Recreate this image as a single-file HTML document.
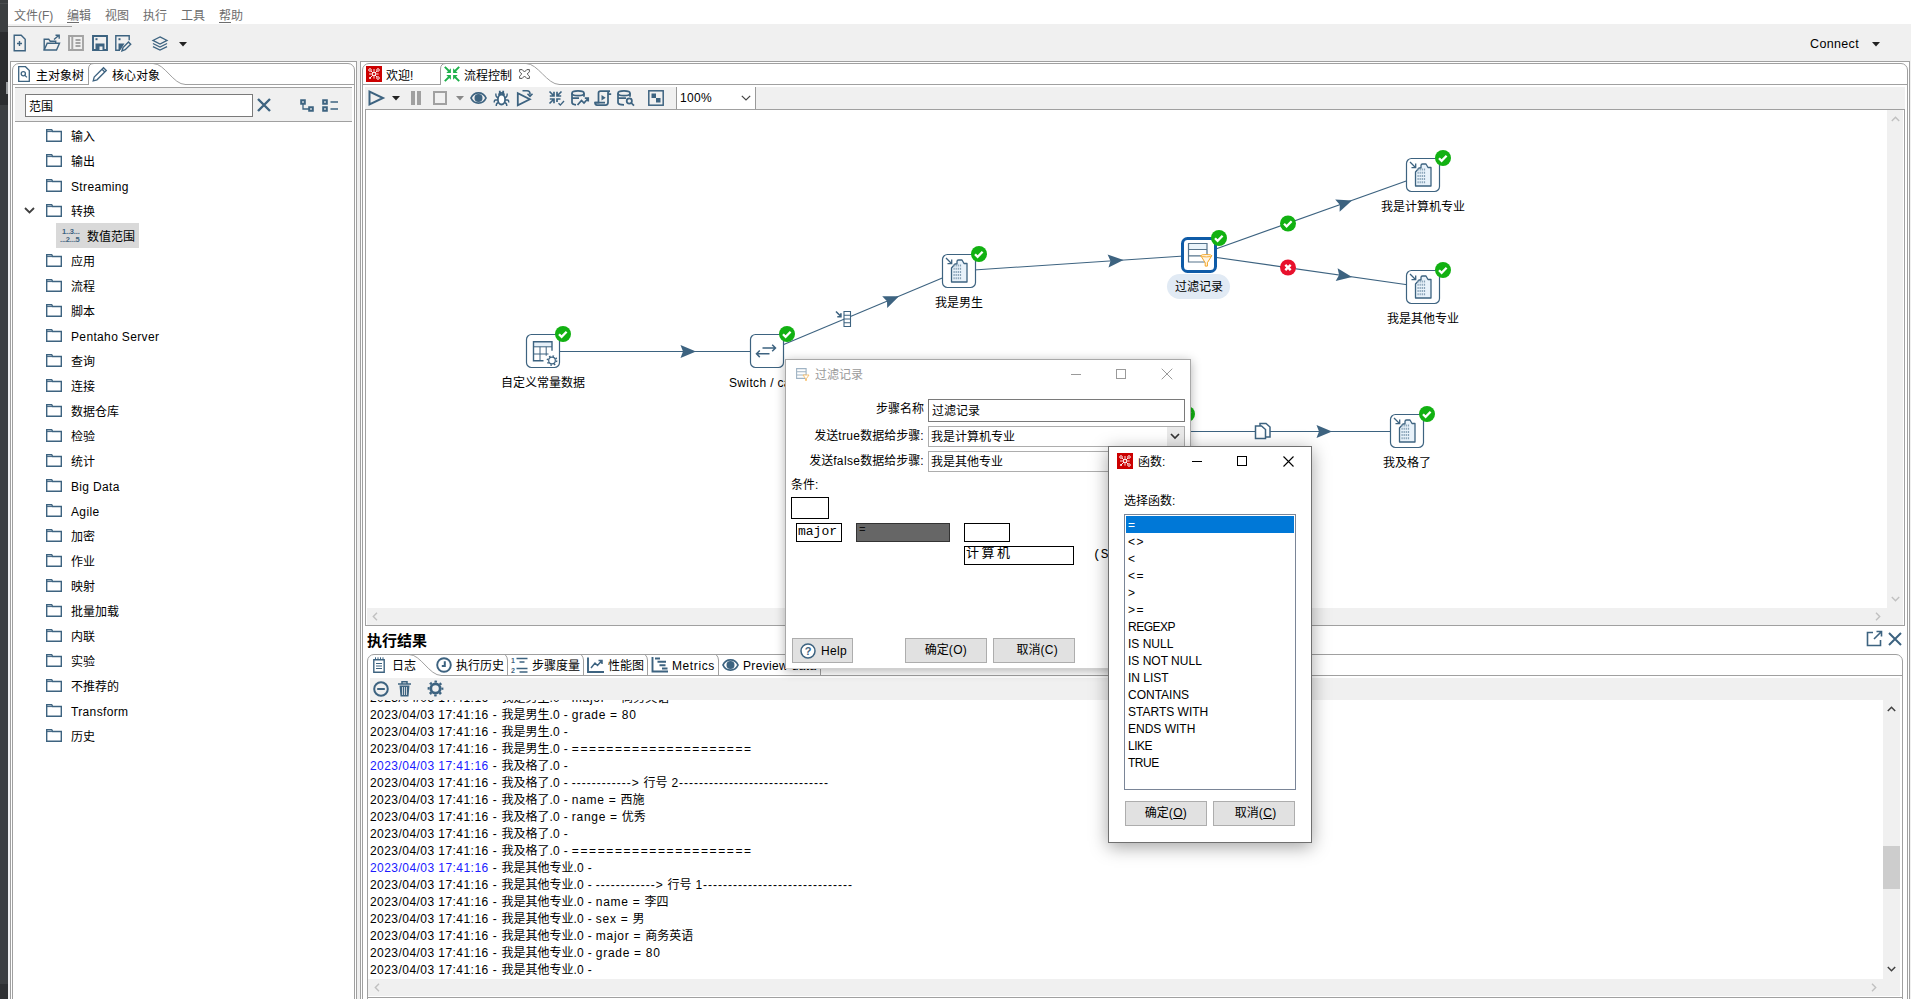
<!DOCTYPE html>
<html lang="zh-CN"><head><meta charset="utf-8"><title>Spoon - 流程控制</title>
<style>
*{box-sizing:border-box;margin:0;padding:0}
html,body{width:1911px;height:999px;overflow:hidden}
body{position:relative;background:#f0f0f0;font-family:"Liberation Sans","Noto Sans CJK SC",sans-serif;font-size:12px;color:#000;line-height:16px}
.a{position:absolute}
.t{position:absolute;white-space:nowrap;line-height:16px;height:16px}
.l{letter-spacing:.35px}
.u{letter-spacing:0}
.ts{letter-spacing:.45px}
.sp{letter-spacing:.7px}
.m{letter-spacing:.7px}
.e{letter-spacing:1.6px}
.d{letter-spacing:1px}
svg{position:absolute;overflow:visible}
.ln{position:absolute;background:#a0a0a0}

</style></head>
<body>
<div class="a" style="left:0;top:0;width:8px;height:999px;background:#3c3f41"></div><div class="a" style="left:0;top:3px;width:8px;height:1px;background:#4a4d4f"></div><div class="a" style="left:0;top:32px;width:8px;height:73px;background:#2b2d2f"></div><div class="a" style="left:6px;top:82px;width:2px;height:12px;background:#9a9d9f"></div><div class="a" style="left:0;top:984px;width:8px;height:15px;background:#2f3133"></div><div class="a" style="left:8px;top:0;width:1903px;height:24px;background:#fff"></div><div class="t" style="left:14px;top:8px;color:#6d6d6d">文件(F)</div><div class="t" style="left:67px;top:8px;color:#6d6d6d">编辑</div><div class="t" style="left:105px;top:8px;color:#6d6d6d">视图</div><div class="t" style="left:143px;top:8px;color:#6d6d6d">执行</div><div class="t" style="left:181px;top:8px;color:#6d6d6d">工具</div><div class="t" style="left:219px;top:8px;color:#6d6d6d">帮助</div><div class="a" style="left:67px;top:22px;width:12px;height:1px;background:#6d6d6d"></div><div class="a" style="left:219px;top:22px;width:12px;height:1px;background:#6d6d6d"></div><div class="a" style="left:8px;top:26px;width:64px;height:1px;background:#a0a0a0"></div><div class="t" style="left:1810px;top:36px;font-size:12.5px"><span class="l">Connect</span></div><svg style="left:1872px;top:42px" width="9" height="5"><path d="M0 0h8l-4 4.5z" fill="#222"/></svg><svg style="left:13px;top:34px" width="14" height="18" viewBox="0 0 14 18"><path d="M1.2 1.2h7l4 4v11.6h-11z" fill="none" stroke="#3d6380" stroke-width="1.4"/><path d="M4 9.5h5M6.5 7v5" fill="none" stroke="#3d6380" stroke-width="1.4"/></svg><svg style="left:43px;top:34px" width="18" height="18" viewBox="0 0 18 18"><path d="M1.2 16V5.2h4.5l1.5 2h5.5v2" fill="none" stroke="#3d6380" stroke-width="1.4"/><path d="M1.2 16l3-6.8h12.3l-3 6.8z" fill="none" stroke="#3d6380" stroke-width="1.4"/><path d="M11 5.5l5-4.3M12.5 1.2h3.7v3.6" fill="none" stroke="#3d6380" stroke-width="1.4"/></svg><svg style="left:68px;top:35px" width="16" height="16" viewBox="0 0 16 16"><path d="M1 1h14v14H1z" fill="none" stroke="#a3a3a3" stroke-width="1.900"/><path d="M4.300 1v14M7.500 5h5M7.500 8h5M7.500 11h5" fill="none" stroke="#a3a3a3" stroke-width="1.900"/></svg><svg style="left:92px;top:35px" width="16" height="16" viewBox="0 0 16 16"><path d="M1 1h14v14H1z" fill="none" stroke="#3d6380" stroke-width="1.900"/><path d="M3.5 8.5h9v6.5h-9z" fill="#3d6380"/><path d="M7.5 11.5h3v3.5h-3z" fill="#f0f0f0"/><path d="M3.5 3.2h2v2h-2z" fill="#3d6380"/></svg><svg style="left:115px;top:35px" width="17" height="17" viewBox="0 0 17 17"><path d="M5 15.2H.8V.8h13.4v4.5" fill="none" stroke="#3d6380" stroke-width="1.4"/><path d="M3.5 8.5h6l-4 6.5h-2z" fill="#3d6380"/><path d="M3.5 3.2h2v2h-2z" fill="#3d6380"/><path d="M7 15.8l1-3.3 5.5-5.5 2.2 2.2-5.5 5.5z" fill="none" stroke="#3d6380" stroke-width="1.4"/></svg><svg style="left:152px;top:36px" width="16" height="15" viewBox="0 0 18 17"><path d="M9 1l8 4-8 4-8-4z" fill="none" stroke="#3d6380" stroke-width="1.4"/><path d="M1 8.5l8 4 8-4M1 12l8 4 8-4" fill="none" stroke="#3d6380" stroke-width="1.4"/></svg><svg style="left:179px;top:42px" width="9" height="5"><path d="M0 0h8l-4 4.5z" fill="#222"/></svg><div class="a" style="left:10px;top:61px;width:347px;height:950px;border:1px solid #a0a0a0;background:#fff"></div><div class="a" style="left:12px;top:63px;width:343px;height:950px;border:1px solid #a0a0a0;border-radius:7px 7px 0 0;background:#fff"></div><div class="ln" style="left:13px;top:84px;width:341px;height:1px"></div><div class="a" style="left:89px;top:84px;width:96px;height:1px;background:#fff"></div><svg style="left:12px;top:63px" width="343" height="23" viewBox="0 0 343 23"><path d="M76.5 21.5 V6 Q76.5 .5 82 .5 M141 .5 C153 .5 161 21.5 173.5 21.5" fill="none" stroke="#a0a0a0" stroke-width="1"/></svg><svg style="left:18px;top:66px" width="12" height="16" viewBox="0 0 12 16"><path d="M.7.7h6.8l3.8 3.8v10.8H.7z" fill="none" stroke="#3d6380" stroke-width="1.3"/><circle cx="5.3" cy="7.8" r="2.1" fill="none" stroke="#3d6380" stroke-width="1.3"/><path d="M6.9 9.4l2 2" fill="none" stroke="#3d6380" stroke-width="1.3"/></svg><div class="t" style="left:36px;top:68px">主对象树</div><svg style="left:92px;top:66px" width="16" height="16" viewBox="0 0 16 16"><path d="M1.2 14.8l1-3.8L11.5 1.7l2.8 2.8L5 13.8z" fill="none" stroke="#3d6380" stroke-width="1.3"/><path d="M10 3.2l2.8 2.8" fill="none" stroke="#3d6380" stroke-width="1.3"/></svg><div class="t" style="left:112px;top:68px">核心对象</div><div class="a" style="left:15px;top:87px;width:337px;height:35px;background:#f0f0f0;border-top:1px solid #a0a0a0;border-bottom:1px solid #a0a0a0"></div><div class="a" style="left:25px;top:94px;width:228px;height:23px;background:#fff;border:1px solid #7a7a7a"></div><div class="t" style="left:29px;top:99px">范围</div><svg style="left:257px;top:98px" width="14" height="14" viewBox="0 0 14 14"><path d="M1 1l12 12M13 1L1 13" stroke="#3d6380" stroke-width="2.400" fill="none"/></svg><svg style="left:300px;top:99px" width="14" height="13" viewBox="0 0 14 13"><path d="M1.200 1.200h3.600v3.600H1.200zM9.200 8.200h3.600v3.600H9.200z" fill="none" stroke="#3d6380" stroke-width="2"/><path d="M3 5v5h6" fill="none" stroke="#3d6380" stroke-width="1.300"/></svg><svg style="left:322px;top:99px" width="16" height="13" viewBox="0 0 16 13"><path d="M1.200 1.200h3.600v3.600H1.200zM1.200 8.200h3.600v3.600H1.200z" fill="none" stroke="#3d6380" stroke-width="2"/><path d="M8.500 3h7.500M8.500 10h7.500" fill="none" stroke="#3d6380" stroke-width="1.400"/></svg><svg style="left:46px;top:129px" width="16" height="13" viewBox="0 0 16 13"><path d="M.7 12.3V.7h5l1 1.8h8.6v9.8z" fill="none" stroke="#3d6380" stroke-width="1.4"/><path d="M.7 2.6h6" stroke="#3d6380" stroke-width="1"/></svg><div class="t" style="left:71px;top:129px">输入</div><svg style="left:46px;top:154px" width="16" height="13" viewBox="0 0 16 13"><path d="M.7 12.3V.7h5l1 1.8h8.6v9.8z" fill="none" stroke="#3d6380" stroke-width="1.4"/><path d="M.7 2.6h6" stroke="#3d6380" stroke-width="1"/></svg><div class="t" style="left:71px;top:154px">输出</div><svg style="left:46px;top:179px" width="16" height="13" viewBox="0 0 16 13"><path d="M.7 12.3V.7h5l1 1.8h8.6v9.8z" fill="none" stroke="#3d6380" stroke-width="1.4"/><path d="M.7 2.6h6" stroke="#3d6380" stroke-width="1"/></svg><div class="t" style="left:71px;top:179px"><span class="l">Streaming</span></div><svg style="left:46px;top:204px" width="16" height="13" viewBox="0 0 16 13"><path d="M.7 12.3V.7h5l1 1.8h8.6v9.8z" fill="none" stroke="#3d6380" stroke-width="1.4"/><path d="M.7 2.6h6" stroke="#3d6380" stroke-width="1"/></svg><div class="t" style="left:71px;top:204px">转换</div><div class="a" style="left:56px;top:223px;width:83px;height:25px;background:#d9d9d9"></div><div class="t" style="left:60px;top:228px;font-size:7.500px;font-weight:bold;line-height:7.500px;height:16px;color:#3d6380;letter-spacing:-.15px">&nbsp;1..3...<br>...2...5</div><div class="t" style="left:87px;top:229px">数值范围</div><svg style="left:46px;top:254px" width="16" height="13" viewBox="0 0 16 13"><path d="M.7 12.3V.7h5l1 1.8h8.6v9.8z" fill="none" stroke="#3d6380" stroke-width="1.4"/><path d="M.7 2.6h6" stroke="#3d6380" stroke-width="1"/></svg><div class="t" style="left:71px;top:254px">应用</div><svg style="left:46px;top:279px" width="16" height="13" viewBox="0 0 16 13"><path d="M.7 12.3V.7h5l1 1.8h8.6v9.8z" fill="none" stroke="#3d6380" stroke-width="1.4"/><path d="M.7 2.6h6" stroke="#3d6380" stroke-width="1"/></svg><div class="t" style="left:71px;top:279px">流程</div><svg style="left:46px;top:304px" width="16" height="13" viewBox="0 0 16 13"><path d="M.7 12.3V.7h5l1 1.8h8.6v9.8z" fill="none" stroke="#3d6380" stroke-width="1.4"/><path d="M.7 2.6h6" stroke="#3d6380" stroke-width="1"/></svg><div class="t" style="left:71px;top:304px">脚本</div><svg style="left:46px;top:329px" width="16" height="13" viewBox="0 0 16 13"><path d="M.7 12.3V.7h5l1 1.8h8.6v9.8z" fill="none" stroke="#3d6380" stroke-width="1.4"/><path d="M.7 2.6h6" stroke="#3d6380" stroke-width="1"/></svg><div class="t" style="left:71px;top:329px"><span class="l">Pentaho Server</span></div><svg style="left:46px;top:354px" width="16" height="13" viewBox="0 0 16 13"><path d="M.7 12.3V.7h5l1 1.8h8.6v9.8z" fill="none" stroke="#3d6380" stroke-width="1.4"/><path d="M.7 2.6h6" stroke="#3d6380" stroke-width="1"/></svg><div class="t" style="left:71px;top:354px">查询</div><svg style="left:46px;top:379px" width="16" height="13" viewBox="0 0 16 13"><path d="M.7 12.3V.7h5l1 1.8h8.6v9.8z" fill="none" stroke="#3d6380" stroke-width="1.4"/><path d="M.7 2.6h6" stroke="#3d6380" stroke-width="1"/></svg><div class="t" style="left:71px;top:379px">连接</div><svg style="left:46px;top:404px" width="16" height="13" viewBox="0 0 16 13"><path d="M.7 12.3V.7h5l1 1.8h8.6v9.8z" fill="none" stroke="#3d6380" stroke-width="1.4"/><path d="M.7 2.6h6" stroke="#3d6380" stroke-width="1"/></svg><div class="t" style="left:71px;top:404px">数据仓库</div><svg style="left:46px;top:429px" width="16" height="13" viewBox="0 0 16 13"><path d="M.7 12.3V.7h5l1 1.8h8.6v9.8z" fill="none" stroke="#3d6380" stroke-width="1.4"/><path d="M.7 2.6h6" stroke="#3d6380" stroke-width="1"/></svg><div class="t" style="left:71px;top:429px">检验</div><svg style="left:46px;top:454px" width="16" height="13" viewBox="0 0 16 13"><path d="M.7 12.3V.7h5l1 1.8h8.6v9.8z" fill="none" stroke="#3d6380" stroke-width="1.4"/><path d="M.7 2.6h6" stroke="#3d6380" stroke-width="1"/></svg><div class="t" style="left:71px;top:454px">统计</div><svg style="left:46px;top:479px" width="16" height="13" viewBox="0 0 16 13"><path d="M.7 12.3V.7h5l1 1.8h8.6v9.8z" fill="none" stroke="#3d6380" stroke-width="1.4"/><path d="M.7 2.6h6" stroke="#3d6380" stroke-width="1"/></svg><div class="t" style="left:71px;top:479px"><span class="l">Big Data</span></div><svg style="left:46px;top:504px" width="16" height="13" viewBox="0 0 16 13"><path d="M.7 12.3V.7h5l1 1.8h8.6v9.8z" fill="none" stroke="#3d6380" stroke-width="1.4"/><path d="M.7 2.6h6" stroke="#3d6380" stroke-width="1"/></svg><div class="t" style="left:71px;top:504px"><span class="l">Agile</span></div><svg style="left:46px;top:529px" width="16" height="13" viewBox="0 0 16 13"><path d="M.7 12.3V.7h5l1 1.8h8.6v9.8z" fill="none" stroke="#3d6380" stroke-width="1.4"/><path d="M.7 2.6h6" stroke="#3d6380" stroke-width="1"/></svg><div class="t" style="left:71px;top:529px">加密</div><svg style="left:46px;top:554px" width="16" height="13" viewBox="0 0 16 13"><path d="M.7 12.3V.7h5l1 1.8h8.6v9.8z" fill="none" stroke="#3d6380" stroke-width="1.4"/><path d="M.7 2.6h6" stroke="#3d6380" stroke-width="1"/></svg><div class="t" style="left:71px;top:554px">作业</div><svg style="left:46px;top:579px" width="16" height="13" viewBox="0 0 16 13"><path d="M.7 12.3V.7h5l1 1.8h8.6v9.8z" fill="none" stroke="#3d6380" stroke-width="1.4"/><path d="M.7 2.6h6" stroke="#3d6380" stroke-width="1"/></svg><div class="t" style="left:71px;top:579px">映射</div><svg style="left:46px;top:604px" width="16" height="13" viewBox="0 0 16 13"><path d="M.7 12.3V.7h5l1 1.8h8.6v9.8z" fill="none" stroke="#3d6380" stroke-width="1.4"/><path d="M.7 2.6h6" stroke="#3d6380" stroke-width="1"/></svg><div class="t" style="left:71px;top:604px">批量加载</div><svg style="left:46px;top:629px" width="16" height="13" viewBox="0 0 16 13"><path d="M.7 12.3V.7h5l1 1.8h8.6v9.8z" fill="none" stroke="#3d6380" stroke-width="1.4"/><path d="M.7 2.6h6" stroke="#3d6380" stroke-width="1"/></svg><div class="t" style="left:71px;top:629px">内联</div><svg style="left:46px;top:654px" width="16" height="13" viewBox="0 0 16 13"><path d="M.7 12.3V.7h5l1 1.8h8.6v9.8z" fill="none" stroke="#3d6380" stroke-width="1.4"/><path d="M.7 2.6h6" stroke="#3d6380" stroke-width="1"/></svg><div class="t" style="left:71px;top:654px">实验</div><svg style="left:46px;top:679px" width="16" height="13" viewBox="0 0 16 13"><path d="M.7 12.3V.7h5l1 1.8h8.6v9.8z" fill="none" stroke="#3d6380" stroke-width="1.4"/><path d="M.7 2.6h6" stroke="#3d6380" stroke-width="1"/></svg><div class="t" style="left:71px;top:679px">不推荐的</div><svg style="left:46px;top:704px" width="16" height="13" viewBox="0 0 16 13"><path d="M.7 12.3V.7h5l1 1.8h8.6v9.8z" fill="none" stroke="#3d6380" stroke-width="1.4"/><path d="M.7 2.6h6" stroke="#3d6380" stroke-width="1"/></svg><div class="t" style="left:71px;top:704px"><span class="l">Transform</span></div><svg style="left:46px;top:729px" width="16" height="13" viewBox="0 0 16 13"><path d="M.7 12.3V.7h5l1 1.8h8.6v9.8z" fill="none" stroke="#3d6380" stroke-width="1.4"/><path d="M.7 2.6h6" stroke="#3d6380" stroke-width="1"/></svg><div class="t" style="left:71px;top:729px">历史</div><svg style="left:24px;top:207px" width="11" height="7" viewBox="0 0 11 7"><path d="M1 1l4.500 4.500L10 1" fill="none" stroke="#404040" stroke-width="1.800"/></svg><div class="a" style="left:360px;top:61px;width:1550px;height:950px;border:1px solid #a0a0a0;background:#fff"></div><div class="a" style="left:362px;top:63px;width:1546px;height:950px;border:1px solid #a0a0a0;border-radius:7px 7px 0 0;background:#fff"></div><div class="ln" style="left:363px;top:84px;width:1544px;height:1px"></div><div class="a" style="left:441px;top:84px;width:118px;height:1px;background:#fff"></div><svg style="left:362px;top:63px" width="300" height="23" viewBox="0 0 300 23"><path d="M78.5 21.5 V6 Q78.5 .5 84 .5 M164 .5 C176 .5 185 21.5 197.5 21.5" fill="none" stroke="#a0a0a0" stroke-width="1"/></svg><svg style="left:366px;top:66px" width="16" height="16" viewBox="0 0 16 16"><rect width="16" height="16" fill="#cc0000"/><g fill="none" stroke="#fff" stroke-width=".9"><circle cx="8" cy="8" r="1.6"/><circle cx="4" cy="4" r="1.3"/><circle cx="12" cy="4" r="1.3"/><circle cx="12" cy="12" r="1.3"/><path d="M5 5l2 2M11 5l-2 2M11 11l-2-2M7 9l-3 3M8 3v3.4M8 9.6v3M3 8h3.4M9.6 8h3"/></g><circle cx="4" cy="12" r="1" fill="#fff"/></svg><div class="t" style="left:386px;top:68px">欢迎<span class="l">!</span></div><svg style="left:444px;top:66px" width="16" height="16" viewBox="0 0 16 16"><g fill="#1eb04b" stroke="none"><path d="M6.900 6.900V2.300L2.300 6.900zM9.100 6.900V2.300L13.700 6.900zM6.900 9.100V13.700L2.300 9.100zM9.100 9.100V13.700L13.700 9.100z"/></g><g fill="none" stroke="#1eb04b" stroke-width="1.900"><path d="M.8.800L5 5M15.200.8L11 5M.8 15.200L5 11M15.200 15.200L11 11"/></g></svg><div class="t" style="left:464px;top:68px">流程控制</div><svg style="left:519px;top:69px" width="11" height="10" viewBox="0 0 11 10"><path d="M.6.6h2.6L5.5 3 7.8.6h2.6v2.2L8.2 5l2.2 2.2v2.2H7.8L5.5 7 3.2 9.4H.6V7.2L2.8 5 .6 2.8z" fill="#fff" stroke="#444" stroke-width=".9"/></svg><div class="a" style="left:365px;top:87px;width:1540px;height:22px;background:#f0f0f0"></div><svg style="left:368px;top:90px" width="17" height="16" viewBox="0 0 17 16"><path d="M1.5 1.5v13l13.5-6.5z" fill="none" stroke="#3d6380" stroke-width="2" stroke-linejoin="miter"/></svg><svg style="left:392px;top:96px" width="9" height="5"><path d="M0 0h8l-4 4.5z" fill="#222"/></svg><div class="a" style="left:411px;top:91px;width:4px;height:14px;background:#a0a0a0"></div><div class="a" style="left:417px;top:91px;width:4px;height:14px;background:#a0a0a0"></div><div class="a" style="left:433px;top:91px;width:14px;height:14px;border:2px solid #a0a0a0"></div><svg style="left:456px;top:96px" width="9" height="5"><path d="M0 0h8l-4 4.5z" fill="#888"/></svg><svg style="left:470px;top:92px" width="17" height="12" viewBox="0 0 17 12"><path d="M1 6C4 -.8 13 -.8 16 6C13 12.800 4 12.800 1 6z" fill="none" stroke="#3d6380" stroke-width="1.800"/><circle cx="8.500" cy="6" r="4" fill="#3d6380"/></svg><svg style="left:493px;top:90px" width="17" height="16" viewBox="0 0 17 16"><g fill="none" stroke="#3d6380" stroke-width="1.800"><ellipse cx="8.500" cy="9.500" rx="3.600" ry="5" fill="#fff"/><path d="M6 5.200Q6 2.800 8.500 2.800Q11 2.800 11 5.200M6.800 2.800V.8M10.200 2.800V.8"/><path stroke-width="1.400" d="M5 7.500Q2.800 7.500 2.800 3.500M12 7.500Q14.200 7.500 14.200 3.500M4.800 10H2.500Q1.200 10 1.200 12.500M12.200 10h2.300Q15.800 10 15.800 12.500M5.300 12.800Q3.200 13 3.200 16M11.700 12.800Q13.800 13 13.800 16"/></g></svg><svg style="left:516px;top:89px" width="18" height="17" viewBox="0 0 18 17"><path d="M1.800 4.200v12l12-6z" fill="none" stroke="#3d6380" stroke-width="1.800"/><path d="M6.500 1.800h4.500q3 0 3 3v1" fill="none" stroke="#3d6380" stroke-width="1.600"/><path d="M11.500 4.800l2.500 2.500 2.500-2.500" fill="none" stroke="#3d6380" stroke-width="1.600"/></svg><svg style="left:548px;top:90px" width="17" height="16" viewBox="0 0 17 16"><g fill="none" stroke="#3d6380" stroke-width="1.700"><path d="M1.500 1.500l4 4M1.800 6h4.200V1.800M13.500 1.500l-4 4M13.200 6H9V1.800M1.500 13.500l4-4M1.800 9h4.200v4.200M9 12V9h3.500"/><path d="M10.500 13.300l1.800 1.800L16 11" stroke-width="1.400"/></g></svg><svg style="left:571px;top:90px" width="18" height="16" viewBox="0 0 18 16"><g fill="none" stroke="#3d6380" stroke-width="1.750"><ellipse cx="7" cy="3.2" rx="6" ry="2.4"/><path d="M1 3.2v9.3Q1 14.5 5 14.8M13 3.2v3.5M1 8h7"/><path d="M6.5 15l4-4.5 2.5 2.5 4-4.5M13.8 8.2h3.4v3.4"/></g></svg><svg style="left:594px;top:90px" width="18" height="16" viewBox="0 0 18 16"><g fill="none" stroke="#3d6380" stroke-width="1.750"><path d="M4.5 12.5V3Q4.5 1 6.5 1h9.5Q14 1 14 3v9.5Q14 15 11.5 15H3Q1 15 1 12.5z"/><path d="M14 4h3.2M1 12.5h10"/></g><path d="M7.5 5v5.5l4.2-2.75z" fill="#3d6380"/></svg><svg style="left:617px;top:90px" width="18" height="16" viewBox="0 0 18 16"><g fill="none" stroke="#3d6380" stroke-width="1.750"><ellipse cx="7" cy="3.2" rx="6" ry="2.4"/><path d="M1 3.2v9.3Q1 14.8 7 14.8M13 3.2v3.5M1 8h8"/><circle cx="12.3" cy="11" r="2.6"/><path d="M14.3 13l2.7 2.7"/></g></svg><svg style="left:648px;top:90px" width="16" height="16" viewBox="0 0 16 16"><rect x=".8" y=".8" width="14.4" height="14.4" fill="none" stroke="#3d6380" stroke-width="1.5"/><rect x="3.5" y="3.5" width="4.5" height="4.5" fill="#3d6380"/><rect x="8" y="8" width="4.5" height="4.5" fill="#3d6380"/></svg><div class="a" style="left:677px;top:87px;width:78px;height:22px;background:#fff"></div><div class="ln" style="left:676px;top:87px;width:1px;height:22px;background:#9a9a9a"></div><div class="ln" style="left:755px;top:87px;width:1px;height:22px;background:#9a9a9a"></div><div class="t" style="left:680px;top:90px"><span class="l">100%</span></div><svg style="left:741px;top:95px" width="10" height="6" viewBox="0 0 10 6"><path d="M.8.8L5 5 9.2.8" fill="none" stroke="#444" stroke-width="1.2"/></svg><div class="a" style="left:365px;top:109px;width:1540px;height:517px;border:1px solid #a0a0a0;background:#fff"></div><div class="a" style="left:1887px;top:110px;width:16px;height:498px;background:#f0f0f0"></div><div class="a" style="left:367px;top:608px;width:1536px;height:17px;background:#f0f0f0"></div><svg style="left:1891px;top:116px" width="9" height="6" viewBox="0 0 9 6"><path d="M.8 5L4.5 1.3 8.2 5" fill="none" stroke="#c0c0c0" stroke-width="1.4"/></svg><svg style="left:1891px;top:596px" width="9" height="6" viewBox="0 0 9 6"><path d="M.8 1L4.5 4.7 8.2 1" fill="none" stroke="#c0c0c0" stroke-width="1.4"/></svg><svg style="left:372px;top:612px" width="6" height="9" viewBox="0 0 6 9"><path d="M5 .8L1.3 4.5 5 8.2" fill="none" stroke="#c0c0c0" stroke-width="1.4"/></svg><svg style="left:1875px;top:612px" width="6" height="9" viewBox="0 0 6 9"><path d="M1 .8L4.7 4.5 1 8.2" fill="none" stroke="#c0c0c0" stroke-width="1.4"/></svg><svg style="left:0;top:0" width="1911" height="999" viewBox="0 0 1911 999"><path d="M543.0 351.5L767.0 351.5" stroke="#3d6380" stroke-width="1.100" fill="none"/><polygon points="696.0,351.5 680.5,345.0 683.0,351.5 680.5,358.0" fill="#3d6380"/><path d="M767.0 351.5L959.0 271.0" stroke="#3d6380" stroke-width="1.100" fill="none"/><polygon points="899.0,296.2 882.2,296.2 887.0,301.2 887.2,308.1" fill="#3d6380"/><path d="M959.0 271.0L1199.0 255.0" stroke="#3d6380" stroke-width="1.100" fill="none"/><polygon points="1123.5,260.0 1107.6,254.6 1110.5,260.9 1108.5,267.5" fill="#3d6380"/><path d="M1199.0 255.0L1423.0 175.0" stroke="#3d6380" stroke-width="1.100" fill="none"/><polygon points="1352.0,200.4 1335.2,199.4 1339.8,204.7 1339.6,211.7" fill="#3d6380"/><path d="M1199.0 255.0L1423.0 287.0" stroke="#3d6380" stroke-width="1.100" fill="none"/><polygon points="1352.0,276.9 1337.6,268.2 1339.1,275.0 1335.7,281.1" fill="#3d6380"/><path d="M1167.0 431.5L1407.0 431.5" stroke="#3d6380" stroke-width="1.100" fill="none"/><polygon points="1332.0,431.5 1316.5,425.0 1319.0,431.5 1316.5,438.0" fill="#3d6380"/><rect x="526.5" y="334.5" width="33" height="33" rx="5" fill="#fff" stroke="#3d6380" stroke-width="1.2"/><rect x="750.5" y="334.5" width="33" height="33" rx="5" fill="#fff" stroke="#3d6380" stroke-width="1.2"/><rect x="942.5" y="254.5" width="33" height="33" rx="5" fill="#fff" stroke="#3d6380" stroke-width="1.2"/><rect x="1182.5" y="238.5" width="33" height="33" rx="5" fill="#fff" stroke="#0f5ba7" stroke-width="3"/><rect x="1406.5" y="158.5" width="33" height="33" rx="5" fill="#fff" stroke="#3d6380" stroke-width="1.2"/><rect x="1406.5" y="270.5" width="33" height="33" rx="5" fill="#fff" stroke="#3d6380" stroke-width="1.2"/><rect x="1390.5" y="414.5" width="33" height="33" rx="5" fill="#fff" stroke="#3d6380" stroke-width="1.2"/><rect x="1150.5" y="414.5" width="33" height="33" rx="5" fill="#fff" stroke="#3d6380" stroke-width="1.2"/><path d="M946.0 258.0l5.5 5.5M947.5 263.7h4.2v-4.2" fill="none" stroke="#3d6380" stroke-width="1.3"/><path d="M951.5 282.0V268.0L955.0 264.0H957.0V261.5Q957.0 260.0 958.5 260.0H962.0L964.0 263.5H967.0V282.0z" fill="#e8f2fa" stroke="#3d6380" stroke-width="1.3" stroke-linejoin="round"/><path d="M953.5 265.5h8.500" stroke="#86a1b6" stroke-width="2" stroke-dasharray="1.200 .9" fill="none"/><path d="M953.5 268.7h8.500" stroke="#86a1b6" stroke-width="2" stroke-dasharray="1.200 .9" fill="none"/><path d="M953.5 271.9h8.500" stroke="#86a1b6" stroke-width="2" stroke-dasharray="1.200 .9" fill="none"/><path d="M953.5 275.1h8.500" stroke="#86a1b6" stroke-width="2" stroke-dasharray="1.200 .9" fill="none"/><path d="M953.5 278.3h8.500" stroke="#86a1b6" stroke-width="2" stroke-dasharray="1.200 .9" fill="none"/><path d="M1410.0 162.0l5.5 5.5M1411.5 167.7h4.2v-4.2" fill="none" stroke="#3d6380" stroke-width="1.3"/><path d="M1415.5 186.0V172.0L1419.0 168.0H1421.0V165.5Q1421.0 164.0 1422.5 164.0H1426.0L1428.0 167.5H1431.0V186.0z" fill="#e8f2fa" stroke="#3d6380" stroke-width="1.3" stroke-linejoin="round"/><path d="M1417.5 169.5h8.500" stroke="#86a1b6" stroke-width="2" stroke-dasharray="1.200 .9" fill="none"/><path d="M1417.5 172.7h8.500" stroke="#86a1b6" stroke-width="2" stroke-dasharray="1.200 .9" fill="none"/><path d="M1417.5 175.9h8.500" stroke="#86a1b6" stroke-width="2" stroke-dasharray="1.200 .9" fill="none"/><path d="M1417.5 179.1h8.500" stroke="#86a1b6" stroke-width="2" stroke-dasharray="1.200 .9" fill="none"/><path d="M1417.5 182.3h8.500" stroke="#86a1b6" stroke-width="2" stroke-dasharray="1.200 .9" fill="none"/><path d="M1410.0 274.0l5.5 5.5M1411.5 279.7h4.2v-4.2" fill="none" stroke="#3d6380" stroke-width="1.3"/><path d="M1415.5 298.0V284.0L1419.0 280.0H1421.0V277.5Q1421.0 276.0 1422.5 276.0H1426.0L1428.0 279.5H1431.0V298.0z" fill="#e8f2fa" stroke="#3d6380" stroke-width="1.3" stroke-linejoin="round"/><path d="M1417.5 281.5h8.500" stroke="#86a1b6" stroke-width="2" stroke-dasharray="1.200 .9" fill="none"/><path d="M1417.5 284.7h8.500" stroke="#86a1b6" stroke-width="2" stroke-dasharray="1.200 .9" fill="none"/><path d="M1417.5 287.9h8.500" stroke="#86a1b6" stroke-width="2" stroke-dasharray="1.200 .9" fill="none"/><path d="M1417.5 291.1h8.500" stroke="#86a1b6" stroke-width="2" stroke-dasharray="1.200 .9" fill="none"/><path d="M1417.5 294.3h8.500" stroke="#86a1b6" stroke-width="2" stroke-dasharray="1.200 .9" fill="none"/><path d="M1394.0 418.0l5.5 5.5M1395.5 423.7h4.2v-4.2" fill="none" stroke="#3d6380" stroke-width="1.3"/><path d="M1399.5 442.0V428.0L1403.0 424.0H1405.0V421.5Q1405.0 420.0 1406.5 420.0H1410.0L1412.0 423.5H1415.0V442.0z" fill="#e8f2fa" stroke="#3d6380" stroke-width="1.3" stroke-linejoin="round"/><path d="M1401.5 425.5h8.500" stroke="#86a1b6" stroke-width="2" stroke-dasharray="1.200 .9" fill="none"/><path d="M1401.5 428.7h8.500" stroke="#86a1b6" stroke-width="2" stroke-dasharray="1.200 .9" fill="none"/><path d="M1401.5 431.9h8.500" stroke="#86a1b6" stroke-width="2" stroke-dasharray="1.200 .9" fill="none"/><path d="M1401.5 435.1h8.500" stroke="#86a1b6" stroke-width="2" stroke-dasharray="1.200 .9" fill="none"/><path d="M1401.5 438.3h8.500" stroke="#86a1b6" stroke-width="2" stroke-dasharray="1.200 .9" fill="none"/><rect x="533.5" y="342.0" width="18.5" height="4.8" fill="#e6f0f8"/><path d="M543.5 360.7H533.5V341.7h18.5v9" fill="none" stroke="#3d6380" stroke-width="1.4"/><path d="M533.5 346.8h18.5M533.5 354.0h15M540.0 346.8v14M546.2 346.8v9" fill="none" stroke="#3d6380" stroke-width="1"/><circle cx="552.0" cy="360.5" r="3.3" fill="#fff" stroke="#3d6380" stroke-width="1.2"/><circle cx="552.0" cy="360.5" r="4.6" fill="none" stroke="#3d6380" stroke-width="1.6" stroke-dasharray="1.5 2.11"/><path d="M762.5 348.0h13M772.2 344.7l3.3 3.3-3.3 3.3M769.5 353.8h-13M759.8 357.1l-3.3-3.3 3.3-3.3" fill="none" stroke="#3d6380" stroke-width="1.500"/><rect x="1188.5" y="243.5" width="18.500" height="5.600" fill="#eaf4fa"/><path d="M1188.5 243.5h18.500v18.500h-18.500zM1188.5 249.5h18.500M1188.5 255.8h18.500" fill="none" stroke="#56748c" stroke-width="1.200"/><path d="M1200.8 255.7h11l-4.4 7v3.4h-2.2v-3.4z" fill="#fff5e6" stroke="#f5a623" stroke-width="1"/><ellipse cx="1206.3" cy="255.7" rx="5.5" ry="1.2" fill="#fff5e6" stroke="#f5a623" stroke-width=".9"/><circle cx="563.0" cy="334.0" r="8.0" fill="#12b112"/><path d="M559.0 334.2l2.6 2.6 5-5" fill="none" stroke="#fff" stroke-width="2.3"/><circle cx="787.0" cy="334.0" r="8.0" fill="#12b112"/><path d="M783.0 334.2l2.6 2.6 5-5" fill="none" stroke="#fff" stroke-width="2.3"/><circle cx="979.0" cy="254.0" r="8.0" fill="#12b112"/><path d="M975.0 254.2l2.6 2.6 5-5" fill="none" stroke="#fff" stroke-width="2.3"/><circle cx="1219.0" cy="238.0" r="8.0" fill="#12b112"/><path d="M1215.0 238.2l2.6 2.6 5-5" fill="none" stroke="#fff" stroke-width="2.3"/><circle cx="1443.0" cy="158.0" r="8.0" fill="#12b112"/><path d="M1439.0 158.2l2.6 2.6 5-5" fill="none" stroke="#fff" stroke-width="2.3"/><circle cx="1443.0" cy="270.0" r="8.0" fill="#12b112"/><path d="M1439.0 270.2l2.6 2.6 5-5" fill="none" stroke="#fff" stroke-width="2.3"/><circle cx="1427.0" cy="414.0" r="8.0" fill="#12b112"/><path d="M1423.0 414.2l2.6 2.6 5-5" fill="none" stroke="#fff" stroke-width="2.3"/><circle cx="1187.0" cy="414.0" r="8.0" fill="#12b112"/><path d="M1183.0 414.2l2.6 2.6 5-5" fill="none" stroke="#fff" stroke-width="2.3"/><circle cx="1288.0" cy="223.5" r="8.0" fill="#12b112"/><path d="M1284.0 223.7l2.6 2.6 5-5" fill="none" stroke="#fff" stroke-width="2.3"/><circle cx="1288.0" cy="267.5" r="8.0" fill="#e8112d"/><path d="M1285.3 264.8l5.4 5.4M1290.7 264.8l-5.4 5.4" fill="none" stroke="#fff" stroke-width="2.4"/><path d="M836.0 311.5l4.5 4.5M837.3 316.8h3.6v-3.6" fill="none" stroke="#3d6380" stroke-width="1.600"/><path d="M844 311.500h6.500v15h-6.500zM844 315.250h6.500M844 319h6.500M844 322.750h6.500" fill="#fff" stroke="#3d6380" stroke-width="1.100"/><path d="M1260 423.500h6l4 3.500v10h-10z" fill="#fff" stroke="#3d6380" stroke-width="1.500"/><path d="M1255.500 426h6l4 3.500v9h-10z" fill="#fff" stroke="#3d6380" stroke-width="1.500"/><rect x="1167" y="274" width="63" height="25" rx="12.5" fill="#e1eaf4"/></svg><div class="t" style="left:491px;top:375px;width:104px;text-align:center">自定义常量数据</div><div class="t" style="left:925px;top:295px;width:68px;text-align:center">我是男生</div><div class="t" style="left:1165px;top:279px;width:68px;text-align:center">过滤记录</div><div class="t" style="left:1371px;top:199px;width:104px;text-align:center">我是计算机专业</div><div class="t" style="left:1377px;top:311px;width:92px;text-align:center">我是其他专业</div><div class="t" style="left:1373px;top:455px;width:68px;text-align:center">我及格了</div><div class="t" style="left:729px;top:375px"><span class="l">Switch / case</span></div><div class="t" style="left:367px;top:632px;font-size:15px;font-weight:bold;line-height:18px;height:18px">执行结果</div><svg style="left:1866px;top:630px" width="17" height="17" viewBox="0 0 17 17"><path d="M7 2.500H1.500v13h13V10" fill="none" stroke="#3d6380" stroke-width="1.6"/><path d="M8 9l7-7M10.500 1.500h5v5" fill="none" stroke="#3d6380" stroke-width="1.6"/></svg><svg style="left:1888px;top:632px" width="14" height="14" viewBox="0 0 14 14"><path d="M1 1l12 12M13 1L1 13" stroke="#3d6380" stroke-width="2" fill="none"/></svg><div class="a" style="left:367px;top:654px;width:1536px;height:360px;border:1px solid #a0a0a0;border-radius:7px 7px 0 0;background:#fff"></div><div class="ln" style="left:368px;top:675px;width:1534px;height:1px"></div><div class="a" style="left:368px;top:675px;width:73px;height:1px;background:#fff"></div><svg style="left:367px;top:654px" width="500" height="23" viewBox="0 0 500 23"><g fill="none" stroke="#a0a0a0" stroke-width="1"><path d="M42 .5C54 .5 62 21.500 74.500 21.500"/><path d="M140.500 21.500V6Q140.500 3 138 .5M216.500 21.500V6Q216.500 3 214 .5M280.500 21.500V6Q280.500 3 278 .5M351.500 21.500V6Q351.500 3 349 .5M453.500 21.500V6Q453.500 3 451 .5"/></g></svg><svg style="left:373px;top:657px" width="12" height="16" viewBox="0 0 12 16"><path d="M.8 2.800h10.400v12.400H.8z" fill="none" stroke="#3d6380" stroke-width="1.4"/><path d="M3 6.500h6M3 9h6M3 11.500h6" fill="none" stroke="#3d6380" stroke-width="1"/><path d="M2.500.3v2.500M5 .3v2.500M7.500.3v2.500M10 .3v2.500" fill="none" stroke="#3d6380" stroke-width="1"/></svg><div class="t" style="left:392px;top:658px">日志</div><svg style="left:436px;top:657px" width="16" height="16" viewBox="0 0 16 16"><circle cx="8" cy="8" r="6.800" fill="none" stroke="#3d6380" stroke-width="1.900"/><path d="M8.800 4.300v4.700H5.800" fill="none" stroke="#3d6380" stroke-width="2"/></svg><div class="t" style="left:456px;top:658px">执行历史</div><svg style="left:511px;top:657px" width="17" height="16" viewBox="0 0 17 16"><path d="M5.500 1.500h11M8.500 5h5M5.500 11.500h11M8.500 15h8" fill="none" stroke="#3d6380" stroke-width="1.300"/></svg><div class="t" style="left:511px;top:656px;font-size:7px;line-height:10px;height:20px;color:#3d6380;font-weight:bold">1<br>2</div><div class="t" style="left:532px;top:658px">步骤度量</div><svg style="left:587px;top:657px" width="17" height="16" viewBox="0 0 17 16"><path d="M1 .5V15h16" fill="none" stroke="#3d6380" stroke-width="1.900"/><path d="M4 11l4-5 2.500 2.500 4-4.500M11.500 3.500h3.500V7" fill="none" stroke="#3d6380" stroke-width="1.5"/></svg><div class="t" style="left:608px;top:658px">性能图</div><svg style="left:651px;top:657px" width="17" height="16" viewBox="0 0 17 16"><path d="M1.500 0V14.500h15.500" fill="none" stroke="#3d6380" stroke-width="1.900"/><path d="M4 1.500h5M6.500 4.800h8.500M8.500 8.200h6M11 11.500h5.500" fill="none" stroke="#3d6380" stroke-width="1.900"/></svg><div class="t" style="left:672px;top:658px"><span class="l" style="letter-spacing:.6px">Metrics</span></div><svg style="left:722px;top:659px" width="17" height="12" viewBox="0 0 17 12"><path d="M1 6C4 -.8 13 -.8 16 6C13 12.800 4 12.800 1 6z" fill="none" stroke="#3d6380" stroke-width="1.800"/><circle cx="8.500" cy="6" r="4" fill="#3d6380"/></svg><div class="t" style="left:743px;top:658px"><span class="l">Preview data</span></div><div class="a" style="left:370px;top:678px;width:1530px;height:22px;background:#f0f0f0"></div><svg style="left:373px;top:681px" width="16" height="16" viewBox="0 0 16 16"><circle cx="8" cy="8" r="6.800" fill="none" stroke="#3d6380" stroke-width="2"/><path d="M4.200 8h7.600" stroke="#3d6380" stroke-width="2"/></svg><svg style="left:398px;top:681px" width="13" height="16" viewBox="0 0 13 16"><path d="M0 3h13M4 2.800V.8h5v2" fill="none" stroke="#3d6380" stroke-width="1.5"/><path d="M1.500 4.500h10l-1 11h-8z" fill="#3d6380"/><path d="M4.500 6v8M6.500 6v8M8.500 6v8" stroke="#f0f0f0" stroke-width=".8"/></svg><svg style="left:427px;top:680px" width="17" height="17" viewBox="0 0 17 17"><circle cx="8.500" cy="8.500" r="4.700" fill="none" stroke="#3d6380" stroke-width="2.800"/><circle cx="8.500" cy="8.500" r="6.900" fill="none" stroke="#3d6380" stroke-width="2" stroke-dasharray="2.500 2.920" stroke-dashoffset="1.250"/></svg><div class="a" style="left:368px;top:700px;width:1515px;height:279px;background:#fff;overflow:hidden"><div class="t lg" style="left:2px;top:-10px"><span class="ts">2023/04/03 17:41:16</span><span class="sp"> - </span>我是男生<span class="l">.0 - </span><span class="m">major = </span>商务英语</div><div class="t lg" style="left:2px;top:7px"><span class="ts">2023/04/03 17:41:16</span><span class="sp"> - </span>我是男生<span class="l">.0 - </span><span class="m">grade = 80</span></div><div class="t lg" style="left:2px;top:24px"><span class="ts">2023/04/03 17:41:16</span><span class="sp"> - </span>我是男生<span class="l">.0 - </span></div><div class="t lg" style="left:2px;top:41px"><span class="ts">2023/04/03 17:41:16</span><span class="sp"> - </span>我是男生<span class="l">.0 - </span><span class="e">=====================</span></div><div class="t lg" style="left:2px;top:58px"><span class="ts" style="color:#1a1aff">2023/04/03 17:41:16</span><span class="sp"> - </span>我及格了<span class="l">.0 - </span></div><div class="t lg" style="left:2px;top:75px"><span class="ts">2023/04/03 17:41:16</span><span class="sp"> - </span>我及格了<span class="l">.0 - </span><span class="d">------------</span><span class="m">&gt; </span>行号<span class="m"> 2</span><span class="d">------------------------------</span></div><div class="t lg" style="left:2px;top:92px"><span class="ts">2023/04/03 17:41:16</span><span class="sp"> - </span>我及格了<span class="l">.0 - </span><span class="m">name = </span>西施</div><div class="t lg" style="left:2px;top:109px"><span class="ts">2023/04/03 17:41:16</span><span class="sp"> - </span>我及格了<span class="l">.0 - </span><span class="m">range = </span>优秀</div><div class="t lg" style="left:2px;top:126px"><span class="ts">2023/04/03 17:41:16</span><span class="sp"> - </span>我及格了<span class="l">.0 - </span></div><div class="t lg" style="left:2px;top:143px"><span class="ts">2023/04/03 17:41:16</span><span class="sp"> - </span>我及格了<span class="l">.0 - </span><span class="e">=====================</span></div><div class="t lg" style="left:2px;top:160px"><span class="ts" style="color:#1a1aff">2023/04/03 17:41:16</span><span class="sp"> - </span>我是其他专业<span class="l">.0 - </span></div><div class="t lg" style="left:2px;top:177px"><span class="ts">2023/04/03 17:41:16</span><span class="sp"> - </span>我是其他专业<span class="l">.0 - </span><span class="d">------------</span><span class="m">&gt; </span>行号<span class="m"> 1</span><span class="d">------------------------------</span></div><div class="t lg" style="left:2px;top:194px"><span class="ts">2023/04/03 17:41:16</span><span class="sp"> - </span>我是其他专业<span class="l">.0 - </span><span class="m">name = </span>李四</div><div class="t lg" style="left:2px;top:211px"><span class="ts">2023/04/03 17:41:16</span><span class="sp"> - </span>我是其他专业<span class="l">.0 - </span><span class="m">sex = </span>男</div><div class="t lg" style="left:2px;top:228px"><span class="ts">2023/04/03 17:41:16</span><span class="sp"> - </span>我是其他专业<span class="l">.0 - </span><span class="m">major = </span>商务英语</div><div class="t lg" style="left:2px;top:245px"><span class="ts">2023/04/03 17:41:16</span><span class="sp"> - </span>我是其他专业<span class="l">.0 - </span><span class="m">grade = 80</span></div><div class="t lg" style="left:2px;top:262px"><span class="ts">2023/04/03 17:41:16</span><span class="sp"> - </span>我是其他专业<span class="l">.0 - </span></div></div><div class="a" style="left:1883px;top:700px;width:17px;height:279px;background:#f0f0f0"></div><div class="a" style="left:1883px;top:846px;width:17px;height:43px;background:#cdcdcd"></div><div class="a" style="left:368px;top:979px;width:1532px;height:17px;background:#f0f0f0"></div><div class="ln" style="left:368px;top:997px;width:1534px;height:1px"></div><svg style="left:1887px;top:706px" width="9" height="6" viewBox="0 0 9 6"><path d="M.8 5L4.500 1.300 8.200 5" fill="none" stroke="#404040" stroke-width="1.5"/></svg><svg style="left:1887px;top:966px" width="9" height="6" viewBox="0 0 9 6"><path d="M.8 1L4.500 4.700 8.200 1" fill="none" stroke="#404040" stroke-width="1.5"/></svg><svg style="left:374px;top:983px" width="6" height="9" viewBox="0 0 6 9"><path d="M5 .8L1.300 4.500 5 8.200" fill="none" stroke="#c0c0c0" stroke-width="1.4"/></svg><svg style="left:1871px;top:983px" width="6" height="9" viewBox="0 0 6 9"><path d="M1 .8L4.700 4.500 1 8.200" fill="none" stroke="#c0c0c0" stroke-width="1.4"/></svg><div class="a" style="left:785px;top:359px;width:406px;height:310px;background:#fff;border:1px solid #a8a8a8;border-bottom-color:#d0d0d0;box-shadow:0 2px 10px 0 rgba(0,0,0,.30)"></div><svg style="left:796px;top:368px" width="14" height="13" viewBox="0 0 14 13"><path d="M.6.6h9.5v9.8H.6zM.6 3.8h9.5M.6 7h9.5" fill="none" stroke="#9fb3c4" stroke-width="1.1"/><path d="M7 7h6l-2.500 3.500v2h-1v-2z" fill="#fff" stroke="#f7bd6a" stroke-width=".9"/></svg><div class="t" style="left:815px;top:367px;color:#9a9a9a">过滤记录</div><div class="a" style="left:1071px;top:374px;width:10px;height:1px;background:#9a9a9a"></div><div class="a" style="left:1116px;top:369px;width:10px;height:10px;border:1px solid #9a9a9a"></div><svg style="left:1161px;top:368px" width="12" height="12" viewBox="0 0 12 12"><path d="M.7.7l10.600 10.600M11.300.7L.7 11.300" stroke="#9a9a9a" stroke-width="1" fill="none"/></svg><div class="t" style="left:785px;width:139px;text-align:right;top:401px">步骤名称</div><div class="a" style="left:928px;top:399px;width:257px;height:23px;border:1px solid #7a7a7a;background:#fff"></div><div class="t" style="left:932px;top:403px">过滤记录</div><div class="t" style="left:785px;width:139px;text-align:right;top:428px">发送<span class="l">true</span>数据给步骤<span class="l">:</span></div><div class="a" style="left:928px;top:426px;width:257px;height:21px;border:1px solid #adadad;background:#fff"></div><div class="a" style="left:1167px;top:427px;width:17px;height:19px;background:#e9e9e9"></div><svg style="left:1170px;top:433px" width="10" height="7" viewBox="0 0 10 7"><path d="M1 1l4 4 4-4" fill="none" stroke="#333" stroke-width="1.7"/></svg><div class="t" style="left:931px;top:429px">我是计算机专业</div><div class="t" style="left:785px;width:139px;text-align:right;top:453px">发送<span class="l">false</span>数据给步骤<span class="l">:</span></div><div class="a" style="left:928px;top:451px;width:257px;height:21px;border:1px solid #adadad;background:#fff"></div><div class="t" style="left:931px;top:454px">我是其他专业</div><div class="t" style="left:791px;top:477px">条件<span class="l">:</span></div><div class="a" style="left:791px;top:497px;width:38px;height:22px;border:1px solid #000;background:#fff"></div><div class="a" style="left:796px;top:523px;width:46px;height:19px;border:1px solid #000;background:#fff"></div><div class="t" style="left:798px;top:524px;font-family:'Liberation Mono','Noto Sans Mono CJK SC','Noto Sans CJK SC',monospace;font-size:13px">major</div><div class="a" style="left:856px;top:523px;width:94px;height:19px;border:1px solid #333;background:#666"></div><div class="t" style="left:859px;top:522px;font-family:'Liberation Mono','Noto Sans Mono CJK SC','Noto Sans CJK SC',monospace;font-size:11px;color:#111">=</div><div class="a" style="left:964px;top:523px;width:46px;height:19px;border:1px solid #000;background:#fff"></div><div class="a" style="left:964px;top:546px;width:110px;height:19px;border:1px solid #000;background:#fff"></div><div class="t" style="left:966px;top:546px;font-family:'Liberation Mono','Noto Sans Mono CJK SC','Noto Sans CJK SC',monospace;font-size:13px;letter-spacing:2.5px">计算机</div><div class="t" style="left:1093px;top:547px;font-family:'Liberation Mono','Noto Sans Mono CJK SC','Noto Sans CJK SC',monospace;font-size:13px">(String)</div><div class="a" style="left:792px;top:638px;width:61px;height:25px;background:#e1e1e1;border:1px solid #adadad;text-align:center;line-height:23px;white-space:nowrap"></div><svg style="left:800px;top:643px" width="16" height="16" viewBox="0 0 16 16"><circle cx="8" cy="8" r="7" fill="#fff" stroke="#3d6380" stroke-width="1.5"/></svg><div class="t" style="left:800px;top:643px;width:16px;text-align:center;color:#3d6380;font-weight:bold;font-size:11px">?</div><div class="t" style="left:821px;top:643px"><span class="l">Help</span></div><div class="a" style="left:905px;top:638px;width:82px;height:25px;background:#e1e1e1;border:1px solid #adadad;text-align:center;line-height:23px;white-space:nowrap">确定<span class="l">(O)</span></div><div class="a" style="left:993px;top:638px;width:82px;height:25px;background:#e1e1e1;border:1px solid #adadad;text-align:center;line-height:23px;white-space:nowrap">&nbsp;&nbsp;取消<span class="l">(C)</span></div><div class="a" style="left:1108px;top:446px;width:204px;height:397px;background:#fff;border:1px solid #707070;box-shadow:0 4px 17px 0 rgba(0,0,0,.36)"></div><svg style="left:1117px;top:453px" width="16" height="16" viewBox="0 0 16 16"><rect width="16" height="16" fill="#cc0000"/><g fill="none" stroke="#fff" stroke-width=".9"><circle cx="8" cy="8" r="1.600"/><circle cx="4" cy="4" r="1.300"/><circle cx="12" cy="4" r="1.300"/><circle cx="12" cy="12" r="1.300"/><path d="M5 5l2 2M11 5l-2 2M11 11l-2-2M7 9l-3 3M8 3v3.400M8 9.600v3M3 8h3.400M9.600 8h3"/></g><circle cx="4" cy="12" r="1" fill="#fff"/></svg><div class="t" style="left:1138px;top:454px">函数<span class="l">:</span></div><div class="a" style="left:1192px;top:461px;width:10px;height:1px;background:#000"></div><div class="a" style="left:1237px;top:456px;width:10px;height:10px;border:1px solid #000"></div><svg style="left:1283px;top:456px" width="11" height="11" viewBox="0 0 11 11"><path d="M.5.5l10 10M10.500.5L.5 10.500" stroke="#000" stroke-width="1.100" fill="none"/></svg><div class="t" style="left:1124px;top:493px">选择函数<span class="l">:</span></div><div class="a" style="left:1124px;top:514px;width:172px;height:276px;border:1px solid #7a8597;background:#fff"></div><div class="a" style="left:1126px;top:516px;width:168px;height:17px;background:#0078d7"></div><div class="t" style="left:1128px;top:517px;color:#fff"><span class="l" style="letter-spacing:1.500px">=</span></div><div class="t" style="left:1128px;top:534px;color:#000"><span class="l" style="letter-spacing:1.500px">&lt;&gt;</span></div><div class="t" style="left:1128px;top:551px;color:#000"><span class="l" style="letter-spacing:1.500px">&lt;</span></div><div class="t" style="left:1128px;top:568px;color:#000"><span class="l" style="letter-spacing:1.500px">&lt;=</span></div><div class="t" style="left:1128px;top:585px;color:#000"><span class="l" style="letter-spacing:1.500px">&gt;</span></div><div class="t" style="left:1128px;top:602px;color:#000"><span class="l" style="letter-spacing:1.500px">&gt;=</span></div><div class="t" style="left:1128px;top:619px;color:#000"><span class="l" style="letter-spacing:-.5px">REGEXP</span></div><div class="t" style="left:1128px;top:636px;color:#000"><span class="l" style="letter-spacing:0">IS NULL</span></div><div class="t" style="left:1128px;top:653px;color:#000"><span class="l" style="letter-spacing:0">IS NOT NULL</span></div><div class="t" style="left:1128px;top:670px;color:#000"><span class="l" style="letter-spacing:0">IN LIST</span></div><div class="t" style="left:1128px;top:687px;color:#000"><span class="l" style="letter-spacing:0">CONTAINS</span></div><div class="t" style="left:1128px;top:704px;color:#000"><span class="l" style="letter-spacing:0">STARTS WITH</span></div><div class="t" style="left:1128px;top:721px;color:#000"><span class="l" style="letter-spacing:0">ENDS WITH</span></div><div class="t" style="left:1128px;top:738px;color:#000"><span class="l" style="letter-spacing:-.5px">LIKE</span></div><div class="t" style="left:1128px;top:755px;color:#000"><span class="l" style="letter-spacing:-.5px">TRUE</span></div><div class="a" style="left:1125px;top:801px;width:82px;height:25px;background:#e1e1e1;border:1px solid #adadad;text-align:center;line-height:23px;white-space:nowrap">确定<span class="l">(<u>O</u>)</span></div><div class="a" style="left:1213px;top:801px;width:82px;height:25px;background:#e1e1e1;border:1px solid #adadad;text-align:center;line-height:23px;white-space:nowrap">&nbsp;取消<span class="l">(<u>C</u>)</span></div></body></html>
